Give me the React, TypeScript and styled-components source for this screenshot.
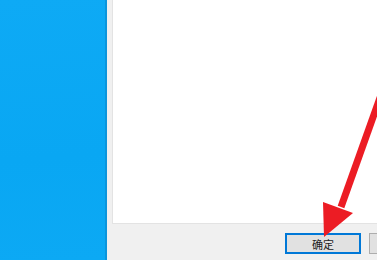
import React from 'react';
import styled, {createGlobalStyle} from 'styled-components';

const GlobalStyle = createGlobalStyle`
  html, body {
    margin: 0;
    padding: 0;
    width: 377px;
    height: 260px;
    overflow: hidden;
  }
  #root {
    height: 260px;
  }
`

const Screen = styled.div`
  position: relative;
  display: flex;
  width: 377px;
  height: 260px;
  overflow: hidden;
  font-family: "Noto Sans CJK SC", "Noto Sans", sans-serif;
`

const Desktop = styled.div`
  width: 105px;
  flex-shrink: 0;
  background: linear-gradient(175deg, #0eaaf5 0%, #09a7f3 60%, #0ca9f4 100%);
  border-right: 2px solid #0b95dc;
`

const Dialog = styled.div`
  flex: 1;
  display: flex;
  flex-direction: column;
  background: #f0f0f0;
  padding-left: 5px;
`

const Content = styled.div`
  height: 223px;
  background: #ffffff;
  border-left: 1px solid #e3e3e3;
  border-bottom: 1px solid #e3e3e3;
`

const Footer = styled.div`
  display: flex;
  gap: 8px;
  padding: 9px 0 0 173px;
`

const Button = styled.button<{focused?: boolean}>`
  flex-shrink: 0;
  width: 76px;
  height: 21px;
  padding: 0;
  background: #e1e1e1;
  border: 1px solid ${p => (p.focused ? '#0078d7' : '#adadad')};
  box-shadow: ${p => (p.focused ? 'inset 0 0 0 1px #0078d7' : 'none')};
  color: #222;
  font-family: "Noto Sans CJK SC", sans-serif;
  font-size: 11px;
  line-height: 18px;
`

const Arrow = styled.svg`
  position: absolute;
  left: 0;
  top: 0;
`

export default function App() {
    return (
        <Screen>
            <GlobalStyle/>
            <Desktop/>
            <Dialog>
                <Content/>
                <Footer>
                    <Button focused>确定</Button>
                    <Button aria-label="取消"/>
                </Footer>
            </Dialog>
            <Arrow width="377" height="260" viewBox="0 0 377 260">
                <line x1="381" y1="95" x2="341" y2="207" stroke="#ec1c24" strokeWidth="7"/>
                <polygon points="324,237 323,202 353,213" fill="#ec1c24"/>
            </Arrow>
        </Screen>
    );
}
